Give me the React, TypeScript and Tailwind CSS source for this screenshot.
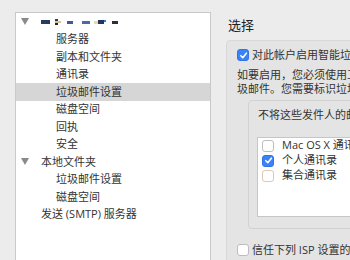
const font = { fontFamily: '"Open Sans", "Noto Sans CJK SC", sans-serif' };

const Check = ({ checked = false, tint = false }: { checked?: boolean; tint?: boolean }) => (
  <span
    className={
      "inline-flex h-[12px] w-[12px] shrink-0 items-center justify-center rounded-[3px] border " +
      (checked
        ? "border-[#2f74e8] bg-[#3a82f7]"
        : tint
        ? "border-[#dcc8bc] bg-white"
        : "border-[#bdbdbd] bg-white")
    }
  >
    {checked && (
      <svg width="9" height="9" viewBox="0 0 10 10">
        <path d="M2 5.2 L4.2 7.4 L8.2 2.4" fill="none" stroke="white" strokeWidth="1.7" strokeLinecap="round" strokeLinejoin="round" />
      </svg>
    )}
  </span>
);

const Triangle = () => (
  <svg width="8" height="7" viewBox="0 0 8 7" className="shrink-0">
    <path d="M0 0 L8 0 L4 7 Z" fill="#8a8a8a" />
  </svg>
);

const TreeRow = ({ label, level, open, selected }: { label: React.ReactNode; level: 0 | 1 | 2; open?: boolean; selected?: boolean }) => (
  <div className={"flex h-[17.5px] items-center " + (selected ? "bg-[#d6d6d6]" : "")}>
    {level === 0 ? (
      <div className="flex items-center">
        <span className="ml-[5px] w-[20px]">{open && <Triangle />}</span>
        <span>{label}</span>
      </div>
    ) : (
      <span className={level === 1 ? "ml-[25px]" : "ml-[40px]"}>{label}</span>
    )}
  </div>
);

// the account name is pixelated in the shot
const Blur = () => (
  <div className="flex items-center pt-[1px]">
    <span className="h-[4px] w-[9px] bg-[#2a3b62]" />
    <span className="ml-[5px] flex flex-col">
      <span className="h-[2px] w-[3px] bg-[#2d3c52]" />
      <span className="h-[2px] w-[6px] bg-[#d9c389]" />
      <span className="h-[2px] w-[3px] bg-[#1d2430]" />
    </span>
    <span className="ml-[6px] h-[3px] w-[6px] bg-[#3b5b96]" />
    <span className="ml-[9px] h-[3px] w-[8px] bg-[#4a6aa8]" />
    <span className="ml-[4px] h-[3px] w-[4px] bg-[#e8dba8]" />
    <span className="h-[4px] w-[6px] bg-[#23355e]" />
    <span className="-mt-[3px] h-[2px] w-[2px] bg-[#3b7fd0]" />
    <span className="ml-[6px] h-[3px] w-[6px] bg-[#2b2f3a]" />
  </div>
);

export default function App() {
  return (
    <div className="flex h-[260px] w-[350px] overflow-hidden bg-[#ececec] text-[11px] text-[#333]" style={font}>
      {/* account tree */}
      <div className="ml-[15px] mt-[12px] h-[260px] w-[196px] shrink-0 border border-[#c9c9c9] bg-white">
        <TreeRow level={0} open label={<Blur />} />
        <TreeRow level={2} label="服务器" />
        <TreeRow level={2} label="副本和文件夹" />
        <TreeRow level={2} label="通讯录" />
        <TreeRow level={2} selected label="垃圾邮件设置" />
        <TreeRow level={2} label="磁盘空间" />
        <TreeRow level={2} label="回执" />
        <TreeRow level={2} label="安全" />
        <TreeRow level={0} open label="本地文件夹" />
        <TreeRow level={2} label="垃圾邮件设置" />
        <TreeRow level={2} label="磁盘空间" />
        <TreeRow level={1} label="发送 (SMTP) 服务器" />
      </div>

      {/* settings */}
      <div className="ml-[15px] min-w-0 flex-1 overflow-hidden">
        <div className="ml-[2px] mt-[17px] text-[13px] leading-[16px] text-[#222]">选择</div>
        <div className="mt-[7px] h-[240px] w-[220px] rounded-[4px] border border-[#d8d8d8] bg-[#e4e4e4] pl-[10px] pt-[6px]">
          <div className="flex h-[16px] items-center gap-[3px] whitespace-nowrap">
            <Check checked />
            <span>对此帐户启用智能垃圾邮件过滤</span>
          </div>
          <div className="mt-[5px] whitespace-nowrap leading-[14px]">
            <div>如要启用，您必须使用工具栏的垃圾按钮来训练它识别垃</div>
            <div>圾邮件。您需要标识垃圾邮件和非垃圾邮件。</div>
          </div>
          <div className="ml-[11px] mt-[4px] h-[129px] w-[200px] rounded-[4px] border border-[#d2d2d2] pl-[9px] pt-[7px]">
            <div className="whitespace-nowrap leading-[14px]">不将这些发件人的邮件标记为垃圾邮件：</div>
            <div className="-ml-[1px] mt-[15px] h-[80px] w-[200px] border border-[#c6c6c6] bg-white pl-[4px]">
              <div className="flex h-[15px] items-center gap-[8px] whitespace-nowrap">
                <Check />
                <span>Mac OS X 通讯录</span>
              </div>
              <div className="flex h-[15px] items-center gap-[8px] whitespace-nowrap">
                <Check checked />
                <span>个人通讯录</span>
              </div>
              <div className="flex h-[15px] items-center gap-[8px] whitespace-nowrap">
                <Check tint />
                <span>集合通讯录</span>
              </div>
            </div>
          </div>
          <div className="mt-[13px] flex h-[16px] items-center gap-[3px] whitespace-nowrap">
            <Check />
            <span>信任下列 ISP 设置的垃圾邮件标头：</span>
          </div>
        </div>
      </div>
    </div>
  );
}
